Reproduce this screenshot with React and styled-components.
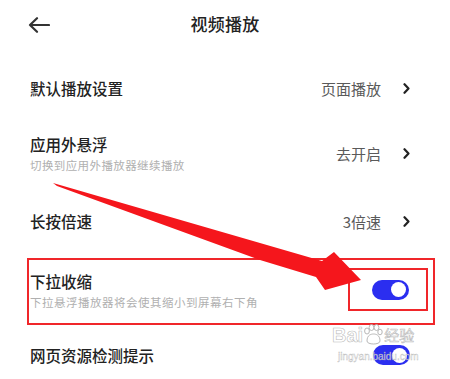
import React from "react";
import styled, { createGlobalStyle } from "styled-components";

const GlobalStyle = createGlobalStyle`
  html, body {
    margin: 0;
    padding: 0;
    background: #fff;
    overflow: hidden;
  }
  body {
    font-family: "Noto Sans CJK SC", "Noto Sans", sans-serif;
    color: #222;
  }
`;

const Page = styled.div`
  position: relative;
  width: 450px;
  height: 379px;
  overflow: hidden;
  background: #fff;
`;

const Header = styled.div`
  position: relative;
  height: 50px;
  display: flex;
  align-items: center;
  justify-content: center;
`;

const BackButton = styled.div`
  position: absolute;
  left: 28px;
  top: 17px;
  width: 22px;
  height: 16px;
  display: flex;
`;

const Title = styled.h1`
  margin: 0 0 3px 0;
  font-size: 17px;
  font-weight: 500;
  color: #222;
  letter-spacing: 0.3px;
`;

const List = styled.div`
  padding-top: 8px;
  display: flex;
  flex-direction: column;
`;

const Row = styled.div`
  height: ${(p) => p.$h}px;
  display: flex;
  align-items: center;
  justify-content: space-between;
  padding: 0 40px 0 30px;
  box-sizing: border-box;
`;

const Highlight = styled.div`
  height: 67px;
  margin: 4px 15px 0 27px;
  border: 2px solid #f0262a;
  box-sizing: border-box;
  display: flex;
  align-items: center;
  justify-content: space-between;
  padding: 0 5px 2px 1px;
`;

const TextBlock = styled.div`
  display: flex;
  flex-direction: column;
  gap: 3px;
`;

const Label = styled.div`
  font-size: 15.5px;
  font-weight: 500;
  color: #222;
  line-height: 20px;
`;

const Sub = styled.div`
  font-size: 11.5px;
  color: #b0b0b0;
  line-height: 16px;
  letter-spacing: ${(p) => p.$ls || 0.4}px;
`;

const Value = styled.div`
  display: flex;
  align-items: center;
  gap: 22px;
  font-size: 15px;
  color: #5a5a5a;
`;

const SwitchFrame = styled.div`
  width: 80px;
  height: 43px;
  margin-top: -2px;
  border: 2px solid #f0262a;
  box-sizing: border-box;
  display: flex;
  align-items: center;
  justify-content: center;
  padding-left: 5px;
`;

const Switch = styled.div`
  width: 37px;
  height: 20px;
  border-radius: 10px;
  background: #2b2ef0;
  position: relative;
  flex-shrink: 0;
  &::after {
    content: "";
    position: absolute;
    right: 3px;
    top: 2.5px;
    width: 15px;
    height: 15px;
    border-radius: 50%;
    background: #fff;
  }
`;

const ArrowLayer = styled.svg`
  position: absolute;
  left: 0;
  top: 0;
  pointer-events: none;
`;

const Watermark = styled.div`
  position: absolute;
  left: 332px;
  top: 324px;
  width: 95px;
  display: flex;
  flex-direction: column;
  pointer-events: none;
`;

const MarkTop = styled.div`
  display: flex;
  align-items: center;
  font-family: "Liberation Sans", Arial, sans-serif;
  color: rgba(255, 255, 255, 0.75);
  -webkit-text-stroke: 0.6px rgba(170, 170, 170, 0.8);
`;

const MarkBai = styled.span`
  font-size: 20px;
  font-weight: bold;
  line-height: 22px;
`;

const MarkJing = styled.span`
  font-family: "Noto Sans CJK SC", sans-serif;
  font-size: 15px;
  line-height: 20px;
  margin-left: 1px;
`;

const MarkUrl = styled.div`
  font-family: "Liberation Sans", Arial, sans-serif;
  font-size: 10px;
  color: rgba(255, 255, 255, 0.75);
  -webkit-text-stroke: 0.4px rgba(170, 170, 170, 0.8);
  margin-left: 6px;
  margin-top: 5px;
`;

function Chevron() {
  return (
    <svg width="7" height="11" viewBox="0 0 7 11">
      <path
        d="M1.5 1.2 L5.5 5.5 L1.5 9.8"
        fill="none"
        stroke="#222"
        strokeWidth="2.2"
        strokeLinecap="round"
        strokeLinejoin="round"
      />
    </svg>
  );
}

function BackArrow() {
  return (
    <svg width="22" height="16" viewBox="0 0 22 16">
      <path
        d="M2 8 H21 M9 1.2 L2 8 L9 14.8"
        fill="none"
        stroke="#333"
        strokeWidth="2.2"
        strokeLinecap="round"
        strokeLinejoin="round"
      />
    </svg>
  );
}

function Paw() {
  return (
    <svg width="20" height="22" viewBox="0 0 20 22">
      <g fill="rgba(255,255,255,0.75)" stroke="rgba(170,170,170,0.85)" strokeWidth="1">
        <ellipse cx="4" cy="7" rx="2.4" ry="3" />
        <ellipse cx="8.5" cy="3.5" rx="2.4" ry="3" />
        <ellipse cx="13.5" cy="3.5" rx="2.4" ry="3" />
        <ellipse cx="17" cy="8" rx="2.2" ry="2.8" />
        <path d="M4 17 C4 11 8 10 10.5 10 C13 10 17 11 17 17 C17 21 4 21 4 17 Z" />
      </g>
    </svg>
  );
}

const rows = [
  { label: "默认播放设置", value: "页面播放", h: 60 },
  { label: "应用外悬浮", sub: "切换到应用外播放器继续播放", value: "去开启", h: 70 },
  { label: "长按倍速", value: "3倍速", h: 66 },
];

export default function App() {
  return (
    <Page>
      <GlobalStyle />
      <Header>
        <BackButton>
          <BackArrow />
        </BackButton>
        <Title>视频播放</Title>
      </Header>
      <List>
        {rows.map((r) => (
          <Row key={r.label} $h={r.h}>
            <TextBlock>
              <Label>{r.label}</Label>
              {r.sub ? <Sub>{r.sub}</Sub> : null}
            </TextBlock>
            <Value>
              <span>{r.value}</span>
              <Chevron />
            </Value>
          </Row>
        ))}
        <Highlight>
          <TextBlock>
            <Label>下拉收缩</Label>
            <Sub $ls={0.5}>下拉悬浮播放器将会使其缩小到屏幕右下角</Sub>
          </TextBlock>
          <SwitchFrame>
            <Switch />
          </SwitchFrame>
        </Highlight>
        <Row $h={60}>
          <Label>网页资源检测提示</Label>
          <Switch />
        </Row>
      </List>
      <ArrowLayer width="450" height="379" viewBox="0 0 450 379">
        <polygon
          points="53,183 260,243 322,261 334,252 361,280 325,290 316,277 260,260 57,186"
          fill="#f5161c"
        />
      </ArrowLayer>
      <Watermark>
        <MarkTop>
          <MarkBai>Bai</MarkBai>
          <Paw />
          <MarkJing>经验</MarkJing>
        </MarkTop>
        <MarkUrl>jingyan.baidu.com</MarkUrl>
      </Watermark>
    </Page>
  );
}
